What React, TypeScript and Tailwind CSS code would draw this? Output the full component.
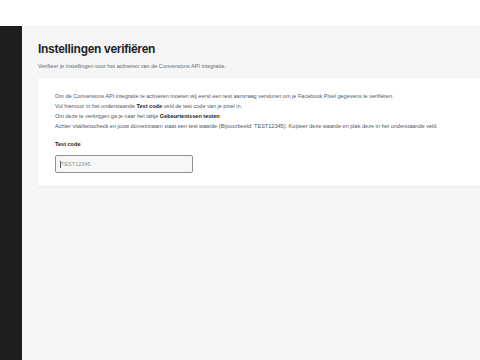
import React from "react";

export default function App() {
  return (
    <div className="w-[480px] h-[360px] flex flex-col bg-white overflow-hidden" style={{ fontFamily: '"Liberation Sans", Arial, sans-serif' }}>
      <div className="h-[26px] bg-white shrink-0" />
      <div className="flex flex-1 min-h-0">
        <div className="w-[22px] bg-[#1e1e1e] shrink-0" />
        <div className="flex-1 bg-[#f6f6f6] pl-[16px] pt-[15px]">
          <h1 className="text-[12px] leading-[16px] font-bold tracking-[-0.3px] text-[#1d2327]">Instellingen verifiëren</h1>
          <p className="mt-[5px] text-[5.55px] leading-[8px] text-[#646970]">
            Verifieer je instellingen voor het activeren van de Conversions API integratie.
          </p>
          <div className="mt-[8px] bg-white shadow-[0_1px_3px_rgba(0,0,0,0.06)] pl-[17px] pt-[13px] h-[108px]">
            <div className="text-[5.55px] leading-[10px] text-[#50575e]">
              <p>Om de Conversions API integratie te activeren moeten wij eerst een test aanvraag versturen om je Facebook Pixel gegevens te verifiëren.</p>
              <p>Vul hiervoor in het onderstaande <b className="text-[#1d2327]">Test code</b> veld de test code van je pixel in.</p>
              <p>Om deze te verkrijgen ga je naar het tabje <b className="text-[#1d2327]">Gebeurtenissen testen</b>.</p>
              <p>Achter vitaliteitscheck en jouw domeinnaam staat een test waarde (Bijvoorbeeld: TEST12345). Kopieer deze waarde en plak deze in het onderstaande veld.</p>
            </div>
            <div className="mt-[9px] text-[5.55px] leading-[8px] font-bold text-[#1d2327]">Test code</div>
            <div className="mt-[7px] w-[138px] h-[18px] border border-[#8c8f94] bg-[#f6f7f7] rounded-[2px] flex items-center pl-[4px]">
              <span className="w-px h-[7px] bg-[#555]" />
              <span className="text-[5.55px] text-[#8c8f94]">TEST12345</span>
            </div>
          </div>
        </div>
      </div>
    </div>
  );
}
